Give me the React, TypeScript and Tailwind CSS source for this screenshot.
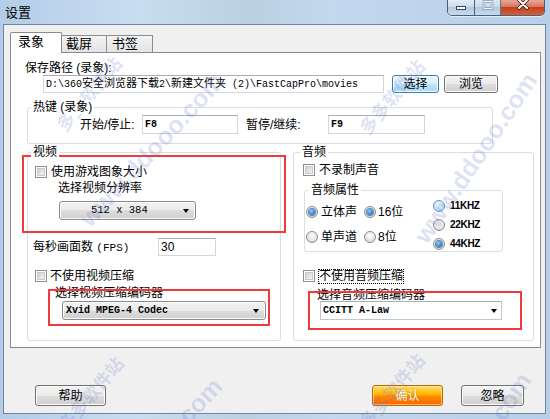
import React from "react";

const CJK = "font-['Liberation_Sans','Noto_Sans_CJK_SC',sans-serif]";
const MONO = "font-['Liberation_Mono','Noto_Sans_CJK_SC',monospace]";

function Checkbox() {
  return (
    <span className="w-[12px] h-[12px] border border-[#8e8f8f] bg-white p-[1px] flex shrink-0">
      <span className="flex-1 border border-[#c9c9c9] bg-[linear-gradient(135deg,#d0d0d0,#f4f4f4)]" />
    </span>
  );
}

function Radio({ checked = false, hover = false }: { checked?: boolean; hover?: boolean }) {
  return (
    <span
      className={`w-[12px] h-[12px] rounded-full border flex items-center justify-center shrink-0 ${
        hover
          ? "border-[#5a94c4] bg-[radial-gradient(circle_at_50%_35%,#f0f9ff,#a9d6f5)]"
          : "border-[#8c8c8c] bg-[radial-gradient(circle_at_50%_35%,#ffffff,#d2d2d2)]"
      }`}
    >
      {checked && (
        <span className="w-[6px] h-[6px] rounded-full bg-[radial-gradient(circle_at_40%_35%,#8fd0fa,#0b4da6)] shadow-[0_0_0_1px_#5b86b8]" />
      )}
    </span>
  );
}

function Button({ children, w, focused = false }: { children: React.ReactNode; w: string; focused?: boolean }) {
  return (
    <div
      className={`${w} h-full rounded-[3px] border flex items-center justify-center leading-none shadow-[inset_0_0_0_1px_#fcfcfc] ${
        focused
          ? "border-[#3c7fb1] bg-[linear-gradient(#eaf6fd,#d9f0fc_50%,#bee6fd_50%,#a7d9f5)]"
          : "border-[#707070] bg-[linear-gradient(#f2f2f2,#ebebeb_50%,#dddddd_50%,#cfcfcf)]"
      }`}
    >
      {children}
    </div>
  );
}

function Arrow() {
  return <span className="w-0 h-0 border-x-[3.5px] border-x-transparent border-t-[4px] border-t-black" />;
}

function Input({ w, children }: { w: string; children?: React.ReactNode }) {
  return (
    <div className={`${w} h-full bg-white border border-[#d3d6dc] border-t-[#abadb3] flex items-center pl-[2px] overflow-hidden whitespace-nowrap`}>
      {children}
    </div>
  );
}

function Group({
  label,
  labelMl,
  boxH,
  className,
  children,
}: {
  label: string;
  labelMl: string;
  boxH: string;
  className: string;
  children?: React.ReactNode;
}) {
  return (
    <div className={`${className} flex flex-col shrink-0`}>
      <div className="h-[14px] flex relative z-10">
        <span className={`${labelMl} px-[2px] bg-white leading-[14px] text-[12px]`}>{label}</span>
      </div>
      <div className={`-mt-[7px] ${boxH} border border-[#d5dfe5] rounded-[3px] flex flex-col`}>{children}</div>
    </div>
  );
}

function Watermarks() {
  const wmA = "absolute -translate-x-1/2 -translate-y-1/2 whitespace-nowrap pointer-events-none text-[rgba(110,120,205,0.22)] font-bold";
  return (
    <>
      <div className={`${wmA} left-[90px] top-[95px] rotate-[-50deg] text-[18px]`}>多多软件站</div>
      <div className={`${wmA} left-[152px] top-[150px] rotate-[-47deg] text-[25px] font-['Liberation_Sans',sans-serif]`}>www.ddooo.com</div>
      <div className={`${wmA} left-[393px] top-[98px] rotate-[-50deg] text-[18px]`}>多多软件站</div>
      <div className={`${wmA} left-[476px] top-[158px] rotate-[-56deg] text-[25px] font-['Liberation_Sans',sans-serif]`}>www.ddooo.com</div>
      <div className={`${wmA} left-[92px] top-[395px] rotate-[-50deg] text-[18px]`}>多多软件站</div>
      <div className={`${wmA} left-[150px] top-[455px] rotate-[-47deg] text-[25px] font-['Liberation_Sans',sans-serif]`}>www.ddooo.com</div>
      <div className={`${wmA} left-[393px] top-[392px] rotate-[-50deg] text-[18px]`}>多多软件站</div>
      <div className={`${wmA} left-[470px] top-[458px] rotate-[-56deg] text-[25px] font-['Liberation_Sans',sans-serif]`}>www.ddooo.com</div>
    </>
  );
}

function WindowButtons() {
  return (
    <div className="mr-[5px] flex h-[16px] border border-t-0 border-[#4b5f79] rounded-b-[5px] overflow-hidden shadow-[0_1px_0_rgba(255,255,255,0.6)]">
      <div className="w-[27px] h-full border-r border-[#4b5f79] bg-[linear-gradient(#e4edf7,#c9d8ea_50%,#b3c8e0_50%,#c8daee)] flex justify-center">
        <svg width="12" height="12" viewBox="0 0 12 12">
          <rect x="1.5" y="6.5" width="9" height="3" fill="#ffffff" stroke="#3a4a5e" strokeWidth="1" />
        </svg>
      </div>
      <div className="w-[26px] h-full border-r border-[#4b5f79] bg-[linear-gradient(#e4edf7,#c9d8ea_50%,#b3c8e0_50%,#c8daee)] flex justify-center opacity-80">
        <svg width="12" height="12" viewBox="0 0 12 12">
          <rect x="2" y="1.5" width="8" height="7" fill="none" stroke="#7d8da2" strokeWidth="2.5" />
          <rect x="2" y="1.5" width="8" height="7" fill="none" stroke="#ffffff" strokeWidth="1" />
        </svg>
      </div>
      <div className="w-[43px] h-full bg-[linear-gradient(#e9a899,#d4775f_45%,#c3411f_50%,#d0603c)] flex justify-center">
        <svg width="14" height="11" viewBox="0 0 14 11">
          <path d="M3 0 L11 8 M11 0 L3 8" stroke="#4a1b10" strokeWidth="3.6" strokeLinecap="round" />
          <path d="M3 0 L11 8 M11 0 L3 8" stroke="#ffffff" strokeWidth="2" strokeLinecap="round" />
        </svg>
      </div>
    </div>
  );
}

export default function App() {
  return (
    <div
      className={`w-[550px] h-[419px] overflow-hidden relative flex flex-col text-[12px] text-black ${CJK} bg-[linear-gradient(90deg,#b3cde8,#c9ddf1_25%,#bcd0e3_45%,#c3d8ee_60%,#b7cfe9)]`}
    >
      {/* title bar */}
      <div className="h-[24px] flex justify-between items-start shrink-0">
        <div className="pl-[5px] h-[24px] flex items-center text-[13px] leading-none">设置</div>
        <WindowButtons />
      </div>

      {/* client area */}
      <div className="ml-[3px] w-[543px] h-[390px] border border-[#71869e] bg-[#f0f0f0] flex flex-col shrink-0">
        {/* tabs */}
        <div className="mt-[7px] ml-[6px] h-[21px] -mb-[1px] flex items-end relative z-10">
          <div className="w-[52px] h-[21px] border border-b-0 border-[#898c95] bg-white rounded-t-[2px] pl-[7px] pt-[2px] leading-[14px] text-[13px]">
            录象
          </div>
          <div className="w-[45px] h-[17px] mb-[1px] border-t border-r border-[#898c95] bg-[linear-gradient(#f4f4f4,#e3e3e3)] pl-[4px] pt-[1px] leading-[14px] text-[13px]">
            截屏
          </div>
          <div className="w-[46px] h-[17px] mb-[1px] border-t border-r border-[#898c95] bg-[linear-gradient(#f4f4f4,#e3e3e3)] pl-[5px] pt-[1px] leading-[14px] text-[13px]">
            书签
          </div>
        </div>

        {/* tab panel */}
        <div className="ml-[6px] w-[531px] h-[296px] border border-[#898c95] bg-white flex flex-col shrink-0">
          <div className="mt-[8px] ml-[14px] h-[14px] leading-[14px]">保存路径 (录象):</div>
          <div className="ml-[32px] h-[18px] flex shrink-0">
            <Input w="w-[341px]">
              <span className={`${MONO} text-[10px] leading-none`}>
                {"D:\\360"}
                <span className="text-[11px]">安全浏览器下载</span>
                {"2\\"}
                <span className="text-[11px]">新建文件夹</span>
                {" (2)\\FastCapPro\\movies"}
              </span>
            </Input>
            <div className="ml-[8px] h-full">
              <Button w="w-[47px]" focused>
                选择
              </Button>
            </div>
            <div className="ml-[5px] h-full">
              <Button w="w-[54px]">浏览</Button>
            </div>
          </div>

          {/* hotkeys */}
          <Group label="热键 (录象)" labelMl="ml-[4px]" boxH="" className="mt-[7px] ml-[16px] w-[466px]">
            <div className="pt-[7px] pb-[9px]">
              <div className="ml-[52px] h-[19px] flex items-center">
                <span className="w-[62px]">开始/停止:</span>
                <Input w="w-[96px]">
                  <span className={`${MONO} text-[10px] font-bold leading-none`}>F8</span>
                </Input>
                <span className="ml-[8px] w-[82px]">暂停/继续:</span>
                <Input w="w-[97px]">
                  <span className={`${MONO} text-[10px] font-bold leading-none`}>F9</span>
                </Input>
              </div>
            </div>
          </Group>

          {/* columns */}
          <div className="mt-[1px] ml-[16px] flex gap-[12px]">
            {/* video */}
            <Group label="视频" labelMl="ml-[4px]" boxH="h-[189px]" className="w-[254px]">
              <div className="mt-[11px] ml-[7px] h-[16px] flex items-center">
                <Checkbox />
                <span className="ml-[4px] leading-[16px]">使用游戏图象大小</span>
              </div>
              <div className="ml-[30px] h-[16px] leading-[16px]">选择视频分辨率</div>
              <div className="mt-[5px] ml-[31px] w-[137px] h-[19px] rounded-[3px] border border-[#8a8a8a] bg-[linear-gradient(#f2f2f2,#ebebeb_50%,#dddddd_50%,#cfcfcf)] shadow-[inset_0_0_0_1px_#fcfcfc] flex items-center shrink-0">
                <span className={`${MONO} text-[10.5px] leading-none ml-[31px] flex-1`}>512 x 384</span>
                <span className="mr-[6px] flex">
                  <Arrow />
                </span>
              </div>
              <div className="mt-[18px] ml-[5px] h-[18px] flex items-center">
                <span className="w-[125px]">
                  每秒画面数 <span className={`${MONO} text-[11px]`}>(FPS)</span>
                </span>
                <Input w="w-[58px]">
                  <span className="text-[12px] leading-none">30</span>
                </Input>
              </div>
              <div className="mt-[12px] ml-[7px] h-[16px] flex items-center">
                <Checkbox />
                <span className="ml-[3px] leading-[16px]">不使用视频压缩</span>
              </div>
              <div className="mt-[1px] ml-[27px] h-[16px] leading-[16px]">选择视频压缩编码器</div>
              <div className="ml-[34px] w-[204px] h-[19px] rounded-[3px] border border-[#8a8a8a] bg-[linear-gradient(#f2f2f2,#ebebeb_50%,#dddddd_50%,#cfcfcf)] shadow-[inset_0_0_0_1px_#fcfcfc] flex items-center shrink-0">
                <span className={`${MONO} text-[10px] font-bold leading-none ml-[3px] flex-1`}>Xvid MPEG-4 Codec</span>
                <span className="mr-[6px] flex">
                  <Arrow />
                </span>
              </div>
            </Group>

            {/* audio */}
            <Group label="音频" labelMl="ml-[7px]" boxH="h-[189px]" className="w-[241px]">
              <div className="mt-[9px] ml-[9px] h-[16px] flex items-center">
                <Checkbox />
                <span className="ml-[4px] leading-[16px]">不录制声音</span>
              </div>
              <Group label="音频属性" labelMl="ml-[5px]" boxH="h-[62px]" className="mt-[5px] ml-[10px] w-[199px]">
                <div className="flex">
                  <div className="w-[128px] flex flex-col">
                    <div className="mt-[13px] h-[16px] flex items-center">
                      <div className="w-[59px] flex items-center">
                        <span className="ml-[1px] flex">
                          <Radio checked />
                        </span>
                        <span className="ml-[3px] leading-[16px]">立体声</span>
                      </div>
                      <Radio checked />
                      <span className="ml-[2px] leading-[16px]">16位</span>
                    </div>
                    <div className="mt-[9px] h-[16px] flex items-center">
                      <div className="w-[59px] flex items-center">
                        <span className="ml-[1px] flex">
                          <Radio />
                        </span>
                        <span className="ml-[3px] leading-[16px]">单声道</span>
                      </div>
                      <Radio />
                      <span className="ml-[2px] leading-[16px]">8位</span>
                    </div>
                  </div>
                  <div className="mt-[5px] flex flex-col">
                    <div className="h-[19px] flex items-center">
                      <Radio hover />
                      <span className="ml-[5px] text-[10px] font-bold font-['Liberation_Sans',sans-serif] tracking-[-0.3px]">11KHZ</span>
                    </div>
                    <div className="h-[19px] flex items-center">
                      <Radio />
                      <span className="ml-[5px] text-[10px] font-bold font-['Liberation_Sans',sans-serif] tracking-[-0.3px]">22KHZ</span>
                    </div>
                    <div className="h-[19px] flex items-center">
                      <Radio checked />
                      <span className="ml-[5px] text-[10px] font-bold font-['Liberation_Sans',sans-serif] tracking-[-0.3px]">44KHZ</span>
                    </div>
                  </div>
                </div>
              </Group>
              <div className="mt-[16px] ml-[9px] h-[16px] flex items-center">
                <Checkbox />
                <span className="ml-[3px] h-[15px] border border-dotted border-black leading-[13px]">不使用音频压缩</span>
              </div>
              <div className="mt-[4px] ml-[23px] h-[14px] leading-[14px]">选择音频压缩编码器</div>
              <div className="-mt-[1px] ml-[26px] w-[182px] h-[19px] bg-white border border-[#c3c6cc] border-t-[#abadb3] flex items-center shrink-0 relative">
                <span className={`${MONO} text-[10px] font-bold leading-none ml-[2px] flex-1`}>CCITT A-Law</span>
                <span className="mr-[4px] flex">
                  <Arrow />
                </span>
              </div>
            </Group>
          </div>
        </div>

        {/* bottom buttons */}
        <div className="mt-[37px] ml-[31px] mr-[21px] h-[21px] flex">
          <Button w="w-[71px]">帮助</Button>
          <div className="flex-1" />
          <div className="w-[71px] h-full rounded-[3px] border border-[#b9690f] bg-[linear-gradient(#ffe066,#ffb300_45%,#ff8a00_55%,#ff6400)] shadow-[inset_0_0_0_1px_rgba(255,240,180,0.6)] flex items-center justify-center text-white leading-none [text-shadow:0_0_2px_rgba(150,70,0,0.6)]">
            确认
          </div>
          <div className="ml-[18px] h-full">
            <Button w="w-[63px]">忽略</Button>
          </div>
        </div>
      </div>

      {/* red annotation boxes */}
      <div className="absolute left-[22px] top-[155px] w-[264px] h-[78px] border-2 border-[#ef3b3b] pointer-events-none" />
      <div className="absolute left-[48px] top-[289px] w-[222px] h-[37px] border-2 border-[#ef3b3b] pointer-events-none" />
      <div className="absolute left-[308px] top-[291px] w-[214px] h-[39px] border-2 border-[#ef3b3b] pointer-events-none" />

      <Watermarks />
    </div>
  );
}
